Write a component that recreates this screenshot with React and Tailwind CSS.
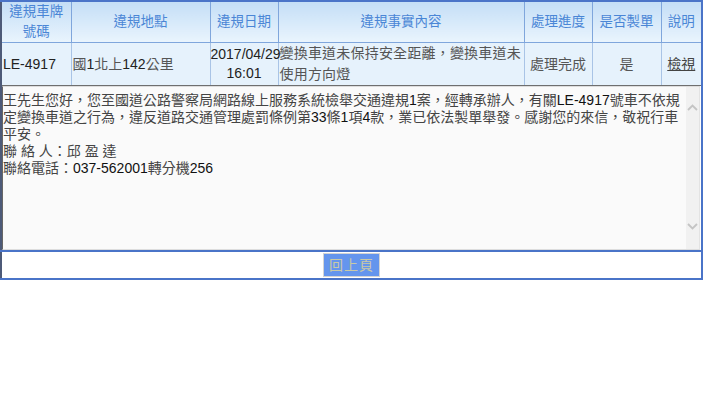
export default function App() {
    const head = "border border-[#7fa6dc] bg-gradient-to-b from-[#c4def6] to-[#e9f4fd] text-[#4a86d6] text-[13.5px] leading-[20px] font-normal text-center px-[1px]";
    const cell = "border-t border-l border-t-[#b9d3ee] border-l-[#6f6f6f] border-r border-r-[#a9c4e6] border-b border-b-[#6f6f6f] bg-[#e6f2fc] text-[14px] leading-[19px] text-[#222]";
    return (
        <div className="w-[720px] h-[405px] bg-white" style={{ fontFamily: '"Liberation Sans", "Noto Sans CJK TC", sans-serif' }}>
            <table className="w-[703px] border-collapse border-2 border-[#4a74c8] border-l-[#4d5a78] table-fixed">
                <colgroup>
                    <col className="w-[70px]" />
                    <col className="w-[139px]" />
                    <col className="w-[68px]" />
                    <col className="w-[246px]" />
                    <col className="w-[68px]" />
                    <col className="w-[69px]" />
                    <col className="w-[41px]" />
                </colgroup>
                <thead>
                    <tr className="h-[41px]">
                        <th className={head}>違規車牌<br />號碼</th>
                        <th className={head}>違規地點</th>
                        <th className={head}>違規日期</th>
                        <th className={head}>違規事實內容</th>
                        <th className={head}>處理進度</th>
                        <th className={head}>是否製單</th>
                        <th className={head}>說明</th>
                    </tr>
                </thead>
                <tbody>
                    <tr className="h-[43px]">
                        <td className={cell + " pl-[1px]"}>LE-4917</td>
                        <td className={cell + " text-[#555] pl-[1px]"}>國<span className="text-[#222]">1</span>北上<span className="text-[#222]">142</span>公里</td>
                        <td className={cell + " text-center"}>2017/04/29<br />16:01</td>
                        <td className={cell + " text-[#555] text-[13.5px] leading-[21px] tracking-[0.2px] align-top pl-[1px]"}>變換車道未保持安全距離，變換車道未使用方向燈</td>
                        <td className={cell + " text-[#555] text-[13.5px] text-center"}>處理完成</td>
                        <td className={cell + " text-[#555] text-center"}>是</td>
                        <td className={cell + " text-center"}><a className="underline text-[#444]">檢視</a></td>
                    </tr>
                    <tr>
                        <td colSpan={7} className="p-0">
                            <div className="flex h-[164px] bg-[#fafafa] border-l border-t border-b border-l-[#666] border-t-[#ddd] border-b-[#ddd] mr-[1px]">
                                <div className="flex-1 text-[14px] leading-[17px] text-[#444] pt-[5px]">
                                    王先生您好，您至國道公路警察局網路線上服務系統檢舉交通違規<span className="text-[#111]">1</span>案，經轉承辦人，有關<span className="text-[#111]">LE-4917</span>號車不依規定變換車道之行為，違反道路交通管理處罰條例第<span className="text-[#111]">33</span>條<span className="text-[#111]">1</span>項<span className="text-[#111]">4</span>款，業已依法製單舉發。感謝您的來信，敬祝行車平安。<br />
                                    聯 絡 人：邱 盈 達<br />
                                    聯絡電話：<span className="text-[#111]">037-562001</span>轉分機<span className="text-[#111]">256</span>
                                </div>
                                <div className="w-[14px] bg-[#f1f1f1] border-r border-[#e3e3e3] flex flex-col justify-between items-center pt-[17px] pb-[19px]">
                                    <svg width="11" height="7" viewBox="0 0 11 7"><path d="M1 6 L5.5 1.5 L10 6" fill="none" stroke="#c4c4c4" strokeWidth="1.8" /></svg>
                                    <svg width="11" height="7" viewBox="0 0 11 7"><path d="M1 1 L5.5 5.5 L10 1" fill="none" stroke="#c4c4c4" strokeWidth="1.8" /></svg>
                                </div>
                            </div>
                        </td>
                    </tr>
                    <tr className="h-[28px]">
                        <td colSpan={7} className="border-t-2 border-[#4a74c8] text-center p-0">
                            <button className="bg-[#6495ed] border border-[#d4d4d4] text-[#c9c9a6] text-[14px] leading-[20px] px-[5px] py-[1px] tracking-[1px]">回上頁</button>
                        </td>
                    </tr>
                </tbody>
            </table>
        </div>
    );
}
